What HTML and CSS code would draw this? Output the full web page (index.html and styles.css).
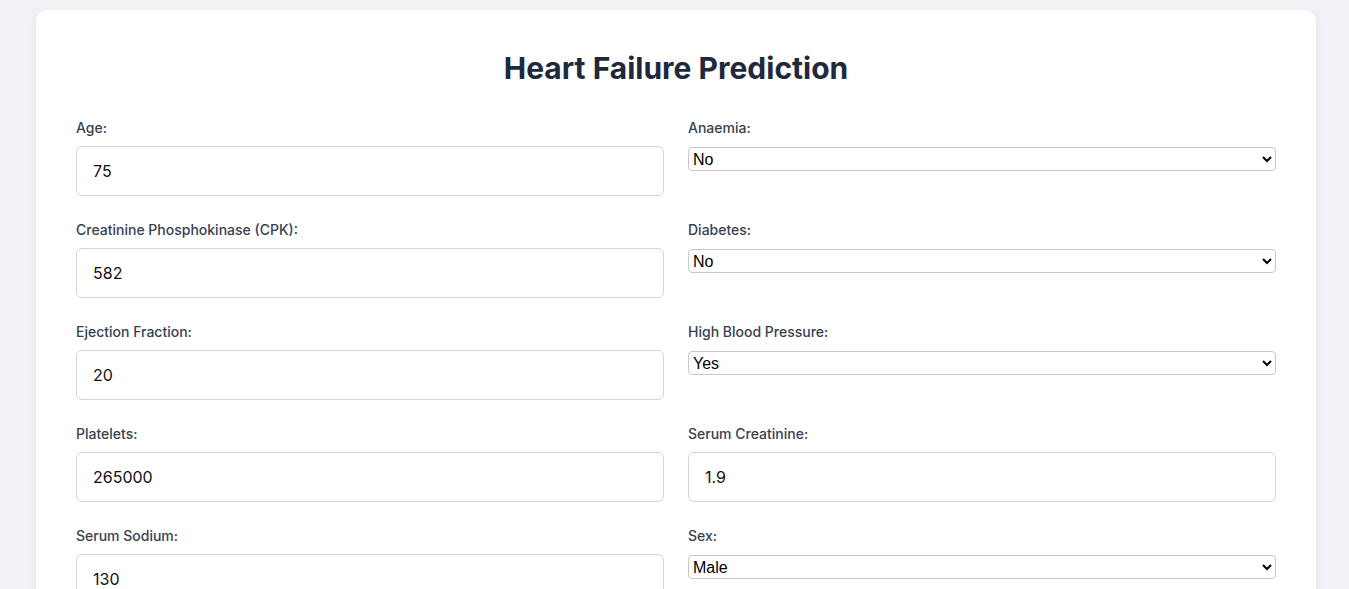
FILE: index.html
```html
<!DOCTYPE html>
<html lang="en">
<head>
<meta charset="utf-8">
<title>Heart Failure Prediction</title>
<link rel="stylesheet" href="styles.css">
</head>
<body>
<main class="card">
  <h1 class="title">Heart Failure Prediction</h1>
  <form class="form-grid">
    <div class="field">
      <label class="label" for="age">Age:</label>
      <input class="text-input" id="age" type="text" value="75">
    </div>
    <div class="field">
      <label class="label" for="anaemia">Anaemia:</label>
      <select class="select-input" id="anaemia"><option>No</option><option>Yes</option></select>
    </div>
    <div class="field">
      <label class="label" for="cpk">Creatinine Phosphokinase (CPK):</label>
      <input class="text-input" id="cpk" type="text" value="582">
    </div>
    <div class="field">
      <label class="label" for="diabetes">Diabetes:</label>
      <select class="select-input" id="diabetes"><option>No</option><option>Yes</option></select>
    </div>
    <div class="field">
      <label class="label" for="ef">Ejection Fraction:</label>
      <input class="text-input" id="ef" type="text" value="20">
    </div>
    <div class="field">
      <label class="label" for="hbp">High Blood Pressure:</label>
      <select class="select-input" id="hbp"><option>Yes</option><option>No</option></select>
    </div>
    <div class="field">
      <label class="label" for="platelets">Platelets:</label>
      <input class="text-input" id="platelets" type="text" value="265000">
    </div>
    <div class="field">
      <label class="label" for="sc">Serum Creatinine:</label>
      <input class="text-input" id="sc" type="text" value="1.9">
    </div>
    <div class="field">
      <label class="label" for="ss">Serum Sodium:</label>
      <input class="text-input" id="ss" type="text" value="130">
    </div>
    <div class="field">
      <label class="label" for="sex">Sex:</label>
      <select class="select-input" id="sex"><option>Male</option><option>Female</option></select>
    </div>
  </form>
</main>
</body>
</html>
```

FILE: styles.css
```css
html, body {
  margin: 0;
  padding: 0;
}

body {
  background: #f0f2f6;
  font-family: Inter, "Noto Sans", sans-serif;
  color: #1f2937;
  padding: 10px 0 0 3px;
}

.card {
  box-sizing: border-box;
  width: 1280px;
  margin: 0 auto;
  background: #ffffff;
  border-radius: 12px;
  padding: 38px 40px 40px;
  box-shadow: 0 4px 12px rgba(0, 0, 0, 0.05);
}

.title {
  margin: 0 0 33px;
  padding-top: 1px;
  text-align: center;
  font-size: 30px;
  font-weight: 700;
  line-height: 38px;
  color: #1e293b;
}

.form-grid {
  display: grid;
  grid-template-columns: 1fr 1fr;
  column-gap: 24px;
  row-gap: 26px;
}

.field {
  display: flex;
  flex-direction: column;
  align-items: stretch;
}

.label {
  display: block;
  font-size: 14px;
  font-weight: 500;
  line-height: 16px;
  color: #374151;
  margin-bottom: 10px;
}

.text-input {
  box-sizing: border-box;
  width: 100%;
  height: 50px;
  padding: 0 16px;
  border: 1px solid #d1d5db;
  border-radius: 6px;
  font-family: Inter, "Noto Sans", sans-serif;
  font-size: 16px;
  color: #111111;
  background: #ffffff;
  outline: none;
}

.select-input {
  box-sizing: border-box;
  width: 100%;
  height: 24px;
  margin-top: 1px;
  align-self: stretch;
  border: 1px solid #c8c8c8;
  border-radius: 4px;
  font-family: "Liberation Sans", Arial, sans-serif;
  font-size: 16px;
  color: #000000;
  background: #ffffff;
}
```
